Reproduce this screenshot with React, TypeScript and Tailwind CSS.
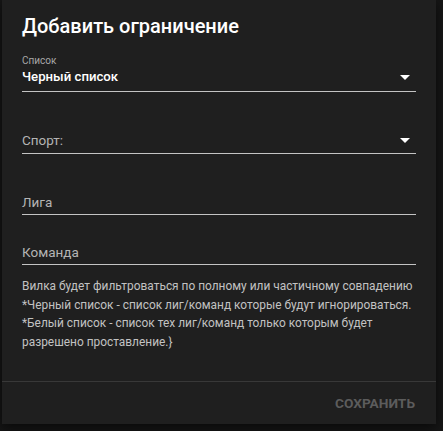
import React from "react";

function DropArrow() {
  return (
    <svg width="10" height="5" viewBox="0 0 10 5" className="shrink-0">
      <path d="M0 0 L5 5 L10 0 Z" fill="#ffffff" />
    </svg>
  );
}

export default function App() {
  return (
    <div
      className="w-[443px] h-[431px] bg-[#161616] overflow-hidden"
      style={{ fontFamily: "Roboto, 'Noto Sans', sans-serif" }}
    >
      <div className="ml-[2px] w-[434px] h-[424px] bg-[#1f1f1f] flex flex-col shadow-[0_4px_12px_rgba(0,0,0,0.6)]">
        <div className="px-[20px]">
          <h2 className="pt-[14px] text-[20px] leading-[24px] font-medium text-white">
            Добавить ограничение
          </h2>

          {/* select: list type */}
          <div className="mt-[17px] border-b border-[#c4c4c4]">
            <div className="text-[10px] leading-[12px] text-[#a8a8a8]">Список</div>
            <div className="mt-[1px] pb-[5px] flex items-center justify-between pr-[6px]">
              <div className="text-[13.2px] leading-[18px] font-medium text-white">Черный список</div>
              <DropArrow />
            </div>
          </div>

          {/* select: sport */}
          <div className="mt-[39px] pb-[4px] border-b border-[#c4c4c4] flex items-center justify-between pr-[6px]">
            <div className="text-[13.5px] leading-[18px] text-[#b4b4b4]">Спорт:</div>
            <DropArrow />
          </div>

          <div className="mt-[39px] pb-[3px] border-b border-[#c4c4c4]">
            <div className="text-[13.5px] leading-[18px] text-[#b4b4b4]">Лига</div>
          </div>

          <div className="mt-[28px] pb-[3px] border-b border-[#c4c4c4]">
            <div className="text-[13.5px] leading-[18px] text-[#b4b4b4]">Команда</div>
          </div>

          <div className="mt-[12px] text-[11.9px] leading-[18.6px] text-[#c2c2c2] whitespace-nowrap">
            <div>Вилка будет фильтроваться по полному или частичному совпадению</div>
            <div>*Черный список - список лиг/команд которые будут игнорироваться.</div>
            <div>*Белый список - список тех лиг/команд только которым будет</div>
            <div>разрешено проставление.&#125;</div>
          </div>
        </div>

        <div className="mt-auto border-t border-[#383838] h-[43px] flex justify-end items-start pr-[21px]">
          <div className="mt-[12px] text-[13.7px] leading-[18px] font-bold text-[#5c5c5c] uppercase">
            Сохранить
          </div>
        </div>
      </div>
    </div>
  );
}
